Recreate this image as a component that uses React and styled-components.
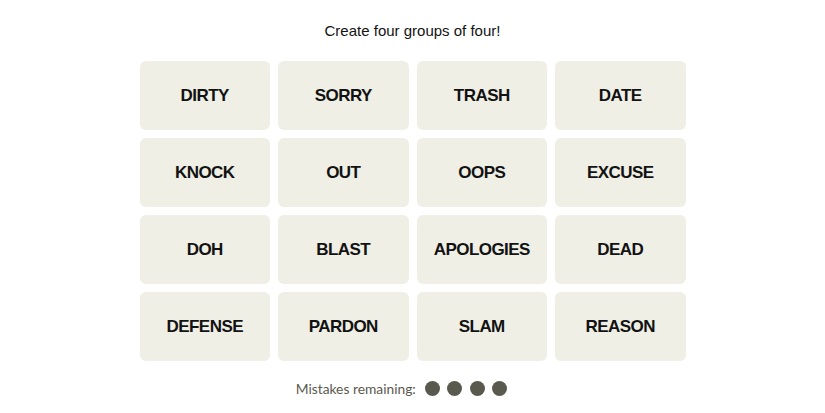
import React from "react";
import styled, { createGlobalStyle } from "styled-components";

const GlobalStyle = createGlobalStyle`
  body {
    margin: 0;
    background: #ffffff;
    font-family: "Liberation Sans", Arial, sans-serif;
  }
`;

const Page = styled.div`
  display: flex;
  flex-direction: column;
  align-items: center;
  padding-top: 22px;
`;

const Heading = styled.p`
  margin: 0;
  font-family: "Liberation Sans", Arial, sans-serif;
  font-size: 15px;
  line-height: 18px;
  color: #121212;
`;

const Board = styled.div`
  display: grid;
  grid-template-columns: repeat(4, 130.5px);
  grid-auto-rows: 69px;
  gap: 8px;
  margin-top: 21px;
`;

const Tile = styled.button`
  border: none;
  border-radius: 6px;
  background: #efefe6;
  color: #121212;
  font-family: "Liberation Sans", Arial, sans-serif;
  font-weight: 700;
  font-size: 17px;
  letter-spacing: -0.55px;
  text-transform: uppercase;
  display: flex;
  align-items: center;
  justify-content: center;
  padding: 0;
  cursor: pointer;
`;

const Mistakes = styled.div`
  display: flex;
  align-items: center;
  gap: 9px;
  margin-top: 19px;
  padding-right: 22px;
  font-family: Lato, "Liberation Sans", sans-serif;
  font-size: 13.8px;
  color: #5a594e;
`;

const Dots = styled.div`
  display: flex;
  gap: 7.5px;
`;

const Dot = styled.span`
  width: 15px;
  height: 15px;
  border-radius: 50%;
  background: #5a594e;
`;

const words = [
  "Dirty", "Sorry", "Trash", "Date",
  "Knock", "Out", "Oops", "Excuse",
  "Doh", "Blast", "Apologies", "Dead",
  "Defense", "Pardon", "Slam", "Reason",
];

export default function App() {
  return (
    <>
      <GlobalStyle />
      <Page>
        <Heading>Create four groups of four!</Heading>
        <Board>
          {words.map((w) => (
            <Tile key={w}>{w}</Tile>
          ))}
        </Board>
        <Mistakes>
          Mistakes remaining:
          <Dots>
            {[0, 1, 2, 3].map((i) => (
              <Dot key={i} />
            ))}
          </Dots>
        </Mistakes>
      </Page>
    </>
  );
}
